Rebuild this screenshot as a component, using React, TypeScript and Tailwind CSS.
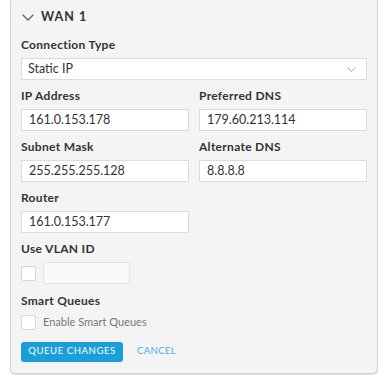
import React from "react";

const font = { fontFamily: "Lato, 'Open Sans', sans-serif" };

function Label({ children }: { children: React.ReactNode }) {
  return <div className="text-[12px] font-bold tracking-[0.3px] text-[#333] leading-[14px] mb-[6px]">{children}</div>;
}

function Input({ value }: { value: string }) {
  return (
    <div className="h-[22px] border border-[#dcdcdc] bg-white flex items-center px-[7px] text-[12.5px] text-[#333]">
      {value}
    </div>
  );
}

function Check() {
  return <div className="w-[15px] h-[15px] border border-[#d6d6d6] bg-white rounded-[2px] shrink-0" />;
}

export default function App() {
  return (
    <div className="w-[383px] h-[377px] bg-white pl-[10px] pr-[5px] overflow-hidden" style={font}>
      <div className="mt-[-3px] h-[377px] border-[1.5px] border-[#d0d0d0] rounded-[5px] bg-[#f4f4f4] px-[10px] shadow-[0_1px_1px_rgba(0,0,0,0.12)]">
        <div className="flex items-center h-[35px] pt-[3px]">
          <svg width="12" height="7" viewBox="0 0 12 7" className="ml-[1px] mr-[7px]">
            <path d="M0.7 0.7 L6 6 L11.3 0.7" fill="none" stroke="#666" strokeWidth="1.3" />
          </svg>
          <span className="text-[12.5px] font-bold tracking-[1px] text-[#333]">WAN 1</span>
        </div>
        <div className="mt-[5px]">
          <Label>Connection Type</Label>
          <div className="h-[22px] border border-[#dcdcdc] bg-white flex items-center justify-between pl-[6px] pr-[10px] text-[12.5px] text-[#333]">
            <span>Static IP</span>
            <svg width="9" height="5" viewBox="0 0 9 5">
              <path d="M0.5 0.5 L4.5 4.5 L8.5 0.5" fill="none" stroke="#aaa" strokeWidth="1" />
            </svg>
          </div>
        </div>
        <div className="grid grid-cols-2 gap-x-[10px] gap-y-[9px] mt-[9px]">
          <div>
            <Label>IP Address</Label>
            <Input value="161.0.153.178" />
          </div>
          <div>
            <Label>Preferred DNS</Label>
            <Input value="179.60.213.114" />
          </div>
          <div>
            <Label>Subnet Mask</Label>
            <Input value="255.255.255.128" />
          </div>
          <div>
            <Label>Alternate DNS</Label>
            <Input value="8.8.8.8" />
          </div>
          <div>
            <Label>Router</Label>
            <Input value="161.0.153.177" />
          </div>
        </div>
        <div className="mt-[9px]">
          <Label>Use VLAN ID</Label>
          <div className="flex items-center gap-[7px]">
            <Check />
            <div className="w-[87px] h-[22px] border border-[#e3e3e3] bg-[#fafafa]" />
          </div>
        </div>
        <div className="mt-[10px]">
          <Label>Smart Queues</Label>
          <div className="flex items-center gap-[7px]">
            <Check />
            <span className="text-[11px] text-[#777]">Enable Smart Queues</span>
          </div>
        </div>
        <div className="flex items-center mt-[11px] gap-[14px]">
          <button className="h-[20px] w-[102px] rounded-[3px] bg-[#1a9fdb] text-white text-[9.5px] tracking-[0.6px] uppercase">
            Queue Changes
          </button>
          <span className="text-[9.5px] tracking-[0.4px] text-[#4aaee0] uppercase">Cancel</span>
        </div>
      </div>
    </div>
  );
}
